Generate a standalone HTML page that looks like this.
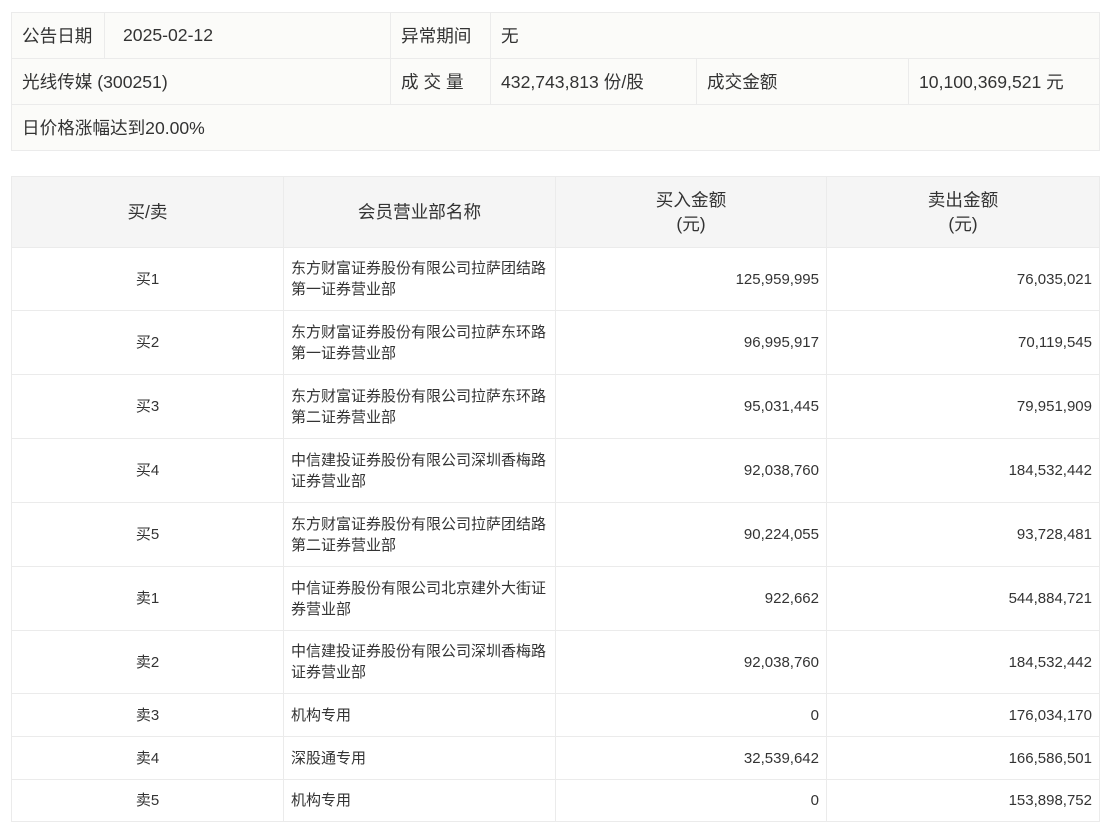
<!DOCTYPE html>
<html><head><meta charset="utf-8"><style>
body{margin:0;background:#fff;font-family:"Liberation Sans","Noto Sans CJK SC",sans-serif;color:#333;}
table{border-collapse:collapse;table-layout:fixed;position:absolute;left:11px;}
td,th{border:1px solid #ebebeb;padding:0;box-sizing:border-box;}
#t1{top:12px;width:1088px;background:#fbfbf9;font-size:17.6px;}
#t1 td{height:46px;padding-left:10px;}
#t2{top:176px;width:1088px;font-size:15px;}
#t2 th{background:#f5f5f5;font-weight:normal;font-size:17.6px;height:71px;line-height:24px;}
#t2 td{line-height:21px;}
#t2 td.c{text-align:center;}
#t2 td.n{padding-left:7px;}
#t2 td.r{text-align:right;padding-right:7px;}
</style></head><body>
<table id="t1">
<colgroup><col style="width:93px"><col style="width:286px"><col style="width:100px"><col style="width:206px"><col style="width:212px"><col style="width:191px"></colgroup>
<tr><td>公告日期</td><td style="padding-left:18px">2025-02-12</td><td>异常期间</td><td colspan="3">无</td></tr>
<tr><td colspan="2">光线传媒 (300251)</td><td>成 交 量</td><td>432,743,813 份/股</td><td>成交金额</td><td>10,100,369,521 元</td></tr>
<tr><td colspan="6">日价格涨幅达到20.00%</td></tr>
</table>
<table id="t2">
<colgroup><col style="width:272px"><col style="width:272px"><col style="width:271px"><col style="width:273px"></colgroup>
<tr><th>买/卖</th><th>会员营业部名称</th><th>买入金额<br>(元)</th><th>卖出金额<br>(元)</th></tr>
<tr style="height:63px"><td class="c">买1</td><td class="n">东方财富证券股份有限公司拉萨团结路<br>第一证券营业部</td><td class="r">125,959,995</td><td class="r">76,035,021</td></tr>
<tr style="height:64px"><td class="c">买2</td><td class="n">东方财富证券股份有限公司拉萨东环路<br>第一证券营业部</td><td class="r">96,995,917</td><td class="r">70,119,545</td></tr>
<tr style="height:64px"><td class="c">买3</td><td class="n">东方财富证券股份有限公司拉萨东环路<br>第二证券营业部</td><td class="r">95,031,445</td><td class="r">79,951,909</td></tr>
<tr style="height:64px"><td class="c">买4</td><td class="n">中信建投证券股份有限公司深圳香梅路<br>证券营业部</td><td class="r">92,038,760</td><td class="r">184,532,442</td></tr>
<tr style="height:64px"><td class="c">买5</td><td class="n">东方财富证券股份有限公司拉萨团结路<br>第二证券营业部</td><td class="r">90,224,055</td><td class="r">93,728,481</td></tr>
<tr style="height:64px"><td class="c">卖1</td><td class="n">中信证券股份有限公司北京建外大街证<br>券营业部</td><td class="r">922,662</td><td class="r">544,884,721</td></tr>
<tr style="height:63px"><td class="c">卖2</td><td class="n">中信建投证券股份有限公司深圳香梅路<br>证券营业部</td><td class="r">92,038,760</td><td class="r">184,532,442</td></tr>
<tr style="height:43px"><td class="c">卖3</td><td class="n">机构专用</td><td class="r">0</td><td class="r">176,034,170</td></tr>
<tr style="height:43px"><td class="c">卖4</td><td class="n">深股通专用</td><td class="r">32,539,642</td><td class="r">166,586,501</td></tr>
<tr style="height:42px"><td class="c">卖5</td><td class="n">机构专用</td><td class="r">0</td><td class="r">153,898,752</td></tr>
</table>
</body></html>
